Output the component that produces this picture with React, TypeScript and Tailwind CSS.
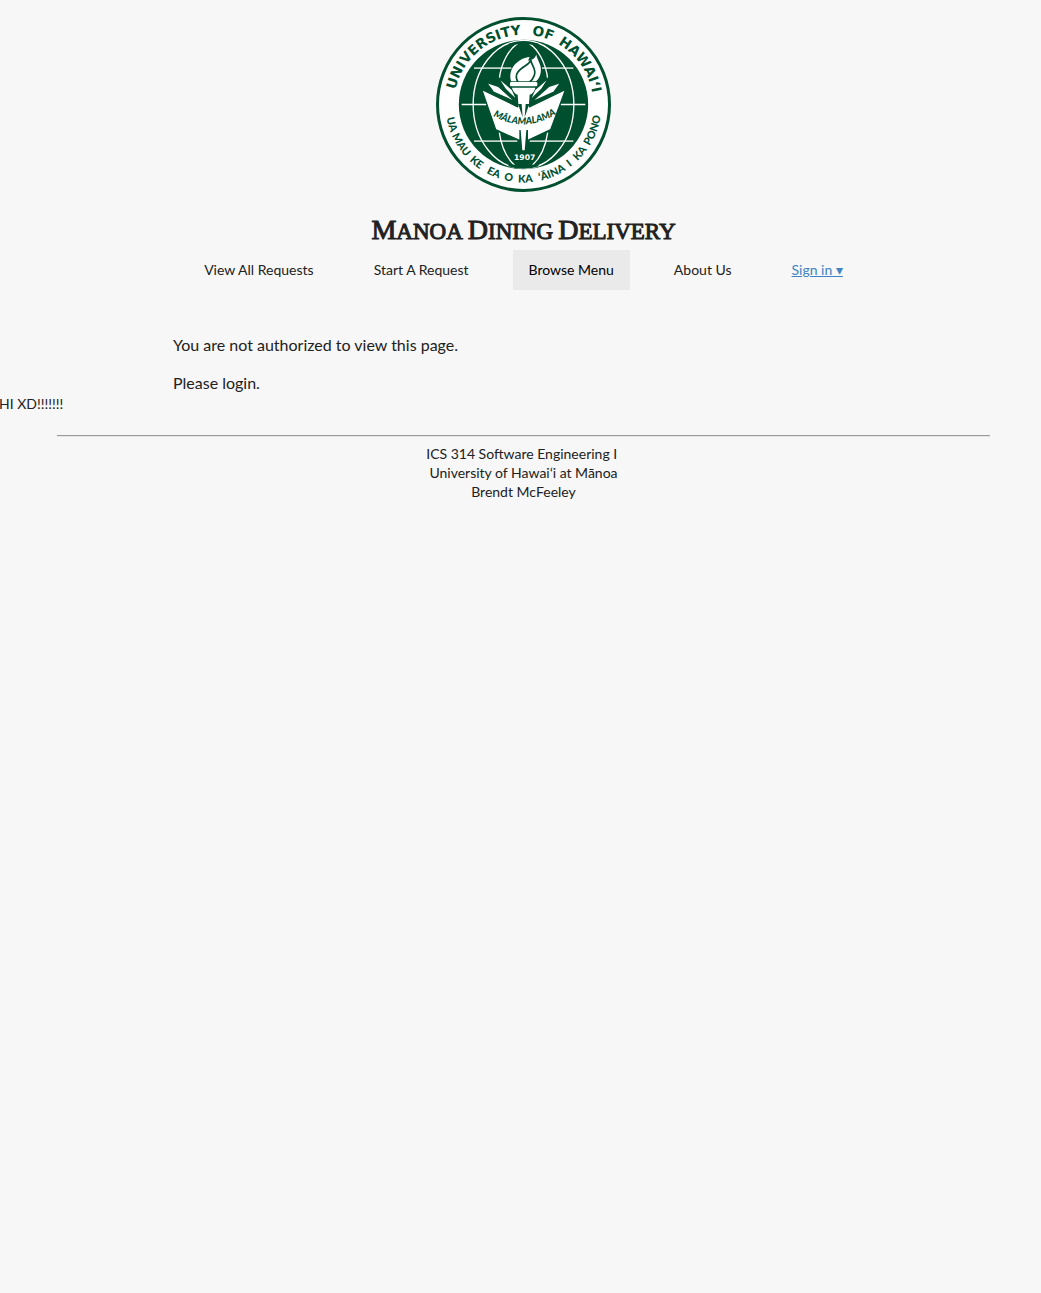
const GREEN = '#00502f';

type Word = { text: string; at: string };

const topWords: Word[] = [
  { text: 'UNIVERSITY', at: '27.8%' },
  { text: 'OF', at: '58.6%' },
  { text: 'HAWAIʻI', at: '80.6%' },
];

const bottomWords: Word[] = [
  { text: 'UA', at: '8.6%' },
  { text: 'MAU', at: '18.2%' },
  { text: 'KE', at: '28.3%' },
  { text: 'EA', at: '36.9%' },
  { text: 'O', at: '43.6%' },
  { text: 'KA', at: '50.8%' },
  { text: 'ʻĀINA', at: '62.4%' },
  { text: 'I', at: '71%' },
  { text: 'KA', at: '77.3%' },
  { text: 'PONO', at: '88.7%' },
];

function Seal() {
  return (
    <svg viewBox="18 21 525 525" className="size-[175px]" role="img" aria-label="University of Hawaiʻi seal">
      <defs>
        <path id="arc-top" d="M71.5 283.5A209 209 0 0 1 489.5 283.5" />
        <path id="arc-bottom" d="M46.5 283.5A234 234 0 0 0 514.5 283.5" />
        <path id="arc-motto" d="M180 312Q282 376 388 307" />
      </defs>
      <circle cx="280.5" cy="283.5" r="258" fill="#fff" stroke={GREEN} strokeWidth="9" />
      <circle cx="280.5" cy="283.5" r="194" fill={GREEN} />

      {/* globe */}
      <g fill="none" stroke="#fff" strokeWidth="4">
        <ellipse cx="280.5" cy="283.5" rx="151" ry="192" />
        <path d="M208 205C214 158 236 118 264 100M353 205C347 158 325 118 297 100M208 368C214 410 230 444 254 466M353 368C347 410 331 444 307 466" />
        <path d="M95 283.5H170M392 283.5H466" />
        <path d="M132 174.5H244M336 174.5H430M132 393.5H262M299 393.5H430" strokeOpacity=".75" strokeWidth="5" />
      </g>
      <path d="M236 104Q280 88 325 104Q280 96 236 104Z" fill={GREEN} stroke={GREEN} strokeWidth="6" />
      <path d="M236 466Q280 481 325 466Q280 470 236 466Z" fill={GREEN} stroke={GREEN} strokeWidth="6" />

      {/* book */}
      <g fill="#fff" stroke={GREEN} strokeWidth="4" strokeLinejoin="miter">
        <path d="M155 238L262 290L270 286H291L299 290L407 238L362 359L292 392V362H270V392L197 359Z" />
        <path d="M169 217L205 229L258 277L190 246Z" />
        <path d="M202 200L247 239L262 272L226 238Z" />
        <path d="M393 217L357 229L303 277L372 246Z" />
        <path d="M359 200L314 239L299 272L335 238Z" />
      </g>
      <path d="M263 254H299L292 350H270Z" fill="#fff" />
      <path d="M264 282H275L278 322ZM298 282H287L284 322Z" fill={GREEN} />
      <path d="M272 360H289L284 421H277Z" fill="#fff" />

      {/* torch */}
      <path d="M243 214C236 188 247 165 270 151C281 144 290 142 299 141L294 152C306 150 315 145 319 134C322 152 337 165 332 188C330 200 325 208 318 214Z" fill="#fff" />
      <path d="M264 216C249 192 270 178 285 168C295 162 300 158 302 150C305 168 320 178 313 196C310 204 305 211 299 216" fill="none" stroke={GREEN} strokeWidth="5" />
      <rect x="240" y="216" width="82" height="13" rx="4" fill="#fff" />
      <path d="M246 233H316C314 244 306 253 296 255H266C256 253 248 244 246 233Z" fill="#fff" />

      <text fontFamily="Lato" fontWeight="900" fontStyle="italic" fontSize="29" fill={GREEN} textAnchor="middle">
        <textPath href="#arc-motto" startOffset="50%">MĀLAMALAMA</textPath>
      </text>
      <text x="284" y="451" fontFamily="DejaVu Sans" fontWeight="700" fontSize="23" fill="#fff" textAnchor="middle">
        1907
      </text>
      {topWords.map((w) => (
        <text key={w.at} fontFamily="DejaVu Sans" fontWeight="700" fontSize="41" fill={GREEN} textAnchor="middle">
          <textPath href="#arc-top" startOffset={w.at}>{w.text}</textPath>
        </text>
      ))}
      {bottomWords.map((w) => (
        <text key={w.at} fontFamily="Lato, 'DejaVu Sans'" fontWeight="900" fontSize="32" fill={GREEN} textAnchor="middle">
          <textPath href="#arc-bottom" startOffset={w.at}>{w.text}</textPath>
        </text>
      ))}
    </svg>
  );
}

function TitleWord({ children }: { children: string }) {
  return (
    <span className="inline-block uppercase first-letter:text-[28px]">{children}</span>
  );
}

const links = [
  { label: 'View All Requests', style: 'text-[#212121]' },
  { label: 'Start A Request', style: 'text-[#212121]' },
  { label: 'Browse Menu', style: 'bg-[#eaeaea] text-black' },
  { label: 'About Us', style: 'text-[#212121]' },
  { label: 'Sign in ▾', style: 'text-[#4183c4] underline' },
];

export default function App() {
  return (
    <div className="min-h-screen bg-[#f7f7f7] font-[Lato,'Noto_Sans',sans-serif] text-sm leading-[19px] text-[#212121]">
      <header className="flex flex-col items-center pt-[17px] pl-[6px]">
        <Seal />
        <h1 className="mt-5 flex h-[38px] items-center gap-[5px] font-['Liberation_Serif',serif] text-[23px] leading-[38px] font-normal [-webkit-text-stroke:1px_#212121]">
          <TitleWord>Manoa</TitleWord> <TitleWord>Dining</TitleWord> <TitleWord>Delivery</TitleWord>
        </h1>
        <nav className="flex gap-7">
          {links.map((l) => (
            <a key={l.label} href="#" className={`block h-10 px-4 pt-[10px] ${l.style}`}>
              {l.label}
            </a>
          ))}
        </nav>
      </header>
      <main>
        <div className="pt-[45px] pl-[173px] text-base leading-[19px]">
          <p>You are not authorized to view this page.</p>
          <p className="mt-[19px]">Please login.</p>
        </div>
        <p className="-ml-px mt-[2px]">HI XD!!!!!!!</p>
      </main>
      <footer className="pt-[22px] pl-[6px] text-center">
        <hr className="mx-[51px] mb-[7px] h-[2px] border-t border-b border-t-[#9a9a9a] border-b-[#e4e4e4]" />
        <p>ICS 314 Software Engineering I&nbsp;</p>
        <p>University of Hawaiʻi at Mānoa</p>
        <p>Brendt McFeeley</p>
      </footer>
    </div>
  );
}
